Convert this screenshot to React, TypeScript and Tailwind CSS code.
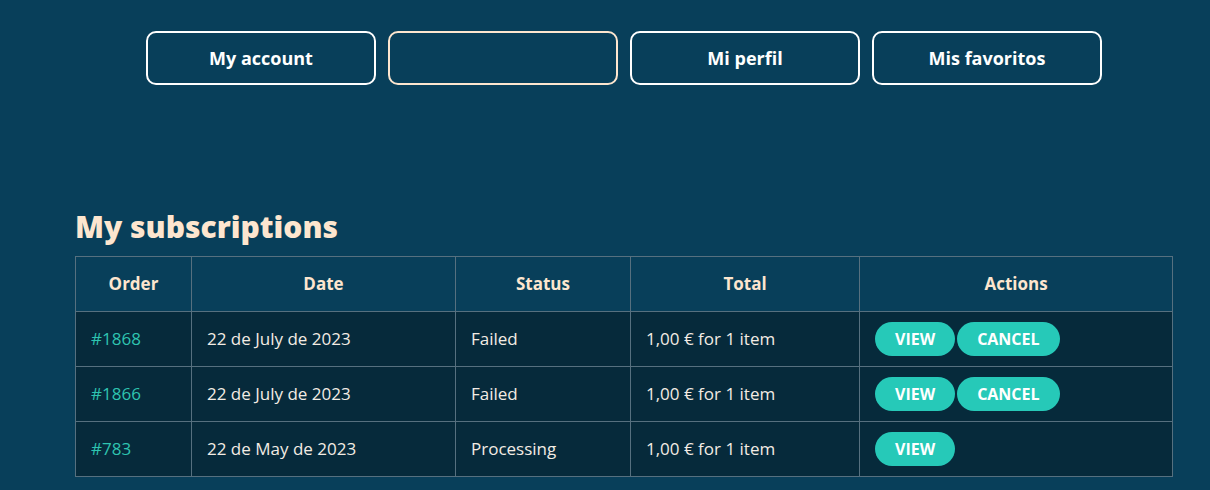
const tabs = ["My account", "", "Mi perfil", "Mis favoritos"];

const rows = [
  { id: "#1868", date: "22 de July de 2023", status: "Failed", cancel: true },
  { id: "#1866", date: "22 de July de 2023", status: "Failed", cancel: true },
  { id: "#783", date: "22 de May de 2023", status: "Processing", cancel: false },
];

function Pill({ label }: { label: string }) {
  return (
    <button className="h-[34px] px-[20px] rounded-full bg-[#26c9b8] text-white font-bold text-[16px] uppercase leading-none">
      {label}
    </button>
  );
}

export default function App() {
  return (
    <div
      className="w-full h-[490px] bg-[#083f5a] overflow-hidden"
      style={{ fontFamily: '"Open Sans", "Liberation Sans", sans-serif' }}
    >
      <div className="ml-[75px] w-[1098px] pt-[31px]">
        <div className="flex justify-center gap-3">
          {tabs.map((t, i) => (
            <button
              key={i}
              className={`w-[230px] h-[54px] rounded-[10px] border-2 text-white font-bold text-[18px] ${
                i === 1 ? "border-[#fde6cf]" : "border-white"
              }`}
            >
              {t}
            </button>
          ))}
        </div>

        <h2 className="mt-[122px] text-[30px] font-extrabold text-[#fde6cf] leading-[40px]">
          My subscriptions
        </h2>

        <table className="mt-[9px] w-full border-collapse text-[17px] text-[#f3ece4]">
          <thead>
            <tr className="h-[55px] text-[#fde6cf]">
              <th className="w-[116px] border border-[#56707f] font-bold">Order</th>
              <th className="w-[264px] border border-[#56707f] font-bold">Date</th>
              <th className="w-[175px] border border-[#56707f] font-bold">Status</th>
              <th className="w-[229px] border border-[#56707f] font-bold">Total</th>
              <th className="border border-[#56707f] font-bold">Actions</th>
            </tr>
          </thead>
          <tbody className="bg-[#062a3b]">
            {rows.map((r) => (
              <tr key={r.id} className="h-[55px]">
                <td className="border border-[#56707f] px-[15px] text-[#2ec4b0]">{r.id}</td>
                <td className="border border-[#56707f] px-[15px]">{r.date}</td>
                <td className="border border-[#56707f] px-[15px]">{r.status}</td>
                <td className="border border-[#56707f] px-[15px]">1,00 € for 1 item</td>
                <td className="border border-[#56707f] px-[15px]">
                  <div className="flex gap-[2px]">
                    <Pill label="View" />
                    {r.cancel && <Pill label="Cancel" />}
                  </div>
                </td>
              </tr>
            ))}
          </tbody>
        </table>
      </div>
    </div>
  );
}
